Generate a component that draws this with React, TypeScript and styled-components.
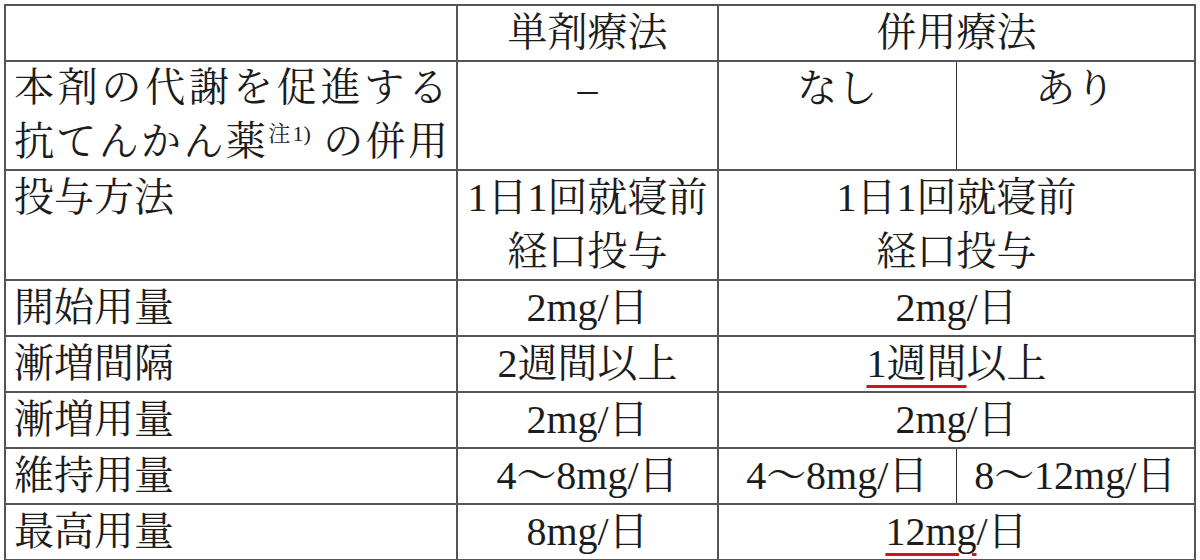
import React from 'react';
import styled, { createGlobalStyle } from 'styled-components';

const GlobalStyle = createGlobalStyle`
  html, body {
    margin: 0;
    padding: 0;
    background: #ffffff;
  }
  body {
    font-family: 'Liberation Serif', 'Noto Serif CJK JP', 'Noto Sans CJK JP', serif;
    color: #1c1c1c;
  }
`;

const Page = styled.div`
  padding: 4px 0 0 4px;
  width: 1200px;
  height: 560px;
  box-sizing: border-box;
`;

const Table = styled.table`
  width: 1190px;
  table-layout: fixed;
  border-collapse: collapse;
  border: 2px solid #3c3c3c;
  font-size: 40px;
  line-height: 54px;
`;

const Row = styled.tr<{ $h: number }>`
  height: ${(p) => p.$h}px;
`;

const Cell = styled.td<{ $label?: boolean; $top?: boolean; $splitL?: boolean; $splitR?: boolean }>`
  border: 2px solid #555555;
  ${(p) => (p.$splitL ? 'border-left: 1px solid #333333;' : '')}
  ${(p) => (p.$splitR ? 'border-right: 1px solid #333333;' : '')}
  padding: 0 ${(p) => (p.$label ? '8px' : '2px')};
  text-align: ${(p) => (p.$label ? 'left' : 'center')};
  vertical-align: ${(p) => (p.$top ? 'top' : 'middle')};
  white-space: nowrap;
  overflow: hidden;
`;

const Spread = styled.div`
  text-align: justify;
  text-align-last: justify;
  text-justify: inter-character;
  white-space: normal;
  margin-top: -1px;
`;

const Note = styled.sup`
  font-size: 22px;
  line-height: 0;
  vertical-align: 14px;
  letter-spacing: 0;
`;

const Marked = styled.span`
  text-decoration-line: underline;
  text-decoration-color: #d2141f;
  text-decoration-thickness: 3px;
  text-underline-offset: 8px;
`;

const Dash = styled.span`
  font-family: 'Liberation Serif', serif;
`;

export default function App() {
  return (
    <Page>
      <GlobalStyle />
      <Table>
        <colgroup>
          <col style={{ width: 452 }} />
          <col style={{ width: 261 }} />
          <col style={{ width: 238 }} />
          <col style={{ width: 239 }} />
        </colgroup>
        <tbody>
          <Row $h={55}>
            <Cell $label />
            <Cell>単剤療法</Cell>
            <Cell colSpan={2}>併用療法</Cell>
          </Row>
          <Row $h={109}>
            <Cell $label $top>
              <Spread>
                本剤の代謝を促進する
                <br />
                抗てんかん薬<Note>注1)</Note> の併用
              </Spread>
            </Cell>
            <Cell $top>
              <Dash>–</Dash>
            </Cell>
            <Cell $top $splitR>
              なし
            </Cell>
            <Cell $top $splitL>
              あり
            </Cell>
          </Row>
          <Row $h={110}>
            <Cell $label $top>
              投与方法
            </Cell>
            <Cell $top>
              1日1回就寝前
              <br />
              経口投与
            </Cell>
            <Cell $top colSpan={2}>
              1日1回就寝前
              <br />
              経口投与
            </Cell>
          </Row>
          <Row $h={55}>
            <Cell $label>開始用量</Cell>
            <Cell>2mg/日</Cell>
            <Cell colSpan={2}>2mg/日</Cell>
          </Row>
          <Row $h={55}>
            <Cell $label>漸増間隔</Cell>
            <Cell>2週間以上</Cell>
            <Cell colSpan={2}>
              <Marked>1週間</Marked>以上
            </Cell>
          </Row>
          <Row $h={56}>
            <Cell $label>漸増用量</Cell>
            <Cell>2mg/日</Cell>
            <Cell colSpan={2}>2mg/日</Cell>
          </Row>
          <Row $h={56}>
            <Cell $label>維持用量</Cell>
            <Cell>4～8mg/日</Cell>
            <Cell $splitR>4～8mg/日</Cell>
            <Cell $splitL>8～12mg/日</Cell>
          </Row>
          <Row $h={56}>
            <Cell $label>最高用量</Cell>
            <Cell>8mg/日</Cell>
            <Cell colSpan={2}>
              <Marked>12mg</Marked>/日
            </Cell>
          </Row>
        </tbody>
      </Table>
    </Page>
  );
}
